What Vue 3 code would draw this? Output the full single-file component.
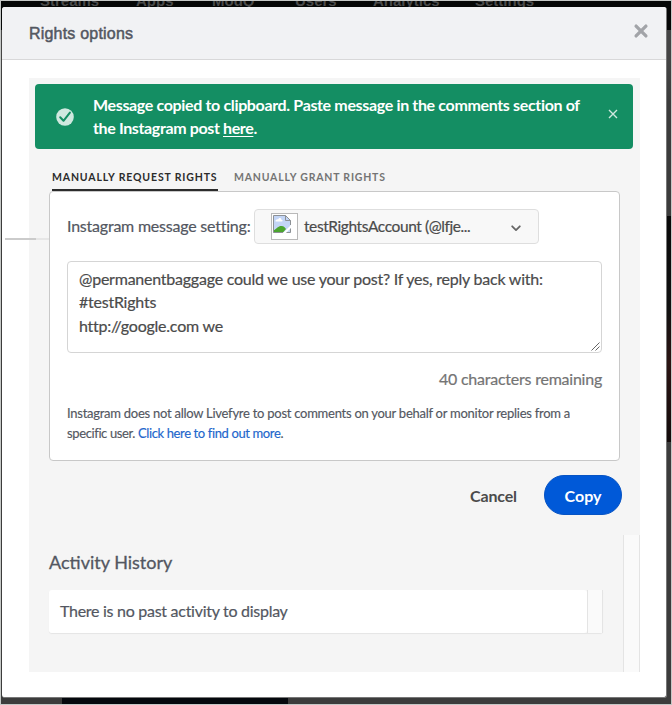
<script setup>
import { ref } from 'vue'

const navItems = ['Streams', 'Apps', 'ModQ', 'Users', 'Analytics', 'Settings']
const message = ref('@permanentbaggage could we use your post? If yes, reply back with:\n#testRights\nhttp://google.com we')
</script>

<template>
  <div class="page">
    <div class="backdrop">
      <nav class="nav">
        <span v-for="item in navItems" :key="item" :class="'nav-' + item.toLowerCase()">{{ item }}</span>
      </nav>
      <div class="side-image"></div>
      <div class="foot-image"></div>
    </div>

    <section class="modal">
      <header class="modal-header">
        <h1>Rights options</h1>
        <svg class="close" viewBox="0 0 14 14"><path d="M2.7 2.7 11.3 11.3M11.3 2.7 2.7 11.3" /></svg>
      </header>

      <div class="panel">
        <div class="edge-line"></div>
        <div class="alert">
          <svg class="check" viewBox="0 0 18 18">
            <circle cx="9" cy="9" r="8.8" />
            <path d="M4.2 9.3 7.5 12.8 13.9 4.6" />
          </svg>
          <p>
            <span class="l1">Message copied to clipboard. Paste message in the comments section of</span><br />
            <span class="l2">the Instagram post <a>here</a>.</span>
          </p>
          <svg class="dismiss" viewBox="0 0 10 10"><path d="M1 1 9 9M9 1 1 9" /></svg>
        </div>

        <div class="tabs">
          <span class="tab active">MANUALLY REQUEST RIGHTS</span>
          <span class="tab">MANUALLY GRANT RIGHTS</span>
        </div>

        <div class="card">
          <div class="setting">
            <span class="setting-label">Instagram message setting:</span>
            <div class="select">
              <svg class="avatar" viewBox="0 0 27 27">
                <rect x="0.5" y="0.5" width="26" height="26" fill="#fff" stroke="#b9b9b9" />
                <path d="M2.5 2.5H14.5L19.5 7.5V19.5H2.5Z" fill="#c3d5f6" />
                <path d="M4.3 8.2C4.3 6.5 6.8 6.3 7.2 6.3 8 4.3 10.5 5 10.4 6.7 12 6.8 12 8.5 10.8 8.5H5Z" fill="#fff" />
                <path d="M2.5 19.5V17.5C6 15.5 7 13 10.5 13.1 13 13.2 14 15 15 16L12 19.5Z" fill="#4ba52f" />
                <path d="M11.5 20.5 20.5 11.5V14.5L14.5 20.5Z" fill="#fff" />
                <path d="M2.5 19.5V2.5H14.5L19.5 7.5V12M14.5 2.5V7.5H19.5M2.5 19.5H12M15.5 19.5H19.5V15.5" fill="none" stroke="#8d9195" />
              </svg>
              <span class="account">testRightsAccount (@lfje...</span>
              <svg class="chevron" viewBox="0 0 10 7"><path d="M1.2 1.3 5 5.1 8.8 1.3" /></svg>
            </div>
          </div>
          <div class="message">{{ message }}<svg class="grip" viewBox="0 0 9 9"><path d="M0.5 8.5 8.5 0.5M4.5 8.5 8.5 4.5" /></svg></div>
          <div class="remaining"><span>40 characters remaining</span></div>
          <p class="note">
            <span class="n1">Instagram does not allow Livefyre to post comments on your behalf or monitor replies from a</span><br />
            <span class="n2">specific user. <a>Click here to find out more</a>.</span>
          </p>
        </div>

        <div class="actions">
          <span class="cancel">Cancel</span>
          <span class="copy"><span>Copy</span></span>
        </div>

        <div class="history">
          <div class="history-main">
            <h2><span>Activity History</span></h2>
            <div class="history-row">
              <div class="history-empty"><span>There is no past activity to display</span></div>
              <div class="track"></div>
            </div>
          </div>
          <div class="track outer"></div>
        </div>
      </div>
    </section>
  </div>
</template>

<style>
body { margin: 0; }
</style>

<style scoped>
* { box-sizing: border-box; }
.page {
  position: relative;
  width: 672px;
  height: 705px;
  padding: 7px 5px 6px 2px;
  overflow: hidden;
  background: #3c3c3c;
  font-family: Lato, "Noto Sans", sans-serif;
  color: #4b4b4b;
}
.page h1, .page h2, .page p { margin: 0; }
.page span { white-space: nowrap; }
.backdrop {
  position: absolute;
  inset: 0;
  border: 1px solid #c5c8c6;
  background: linear-gradient(#050706 0 29px, #444 29px 60px, #3c3c3c 100px);
}
.nav {
  position: absolute;
  inset: -9px 0 auto 0;
  height: 16px;
  clip-path: inset(9px 0 0 0);
  font: 700 15px/18px "Liberation Sans", sans-serif;
  color: #4a4a4a;
}
.nav span { position: absolute; top: 0; }
.nav .nav-streams { left: 39px; }
.nav .nav-apps { left: 135px; }
.nav .nav-modq { left: 211px; }
.nav .nav-users { left: 294px; }
.nav .nav-analytics { left: 372px; }
.nav .nav-settings { left: 474px; }
.side-image {
  position: absolute;
  top: 215px;
  right: 0;
  width: 6px;
  height: 226px;
  background: linear-gradient(#090909, #111 40%, #2b1413 65%, #130b0b);
}
.foot-image {
  position: absolute;
  left: 61px;
  bottom: 0;
  width: 226px;
  height: 7px;
  background: #05080d;
}
.modal {
  position: relative;
  width: 665px;
  height: 691px;
  border: solid #777;
  border-width: 0 1px 1px 0;
  border-radius: 3px;
  background: #fff;
  overflow: hidden;
}
.modal-header {
  display: flex;
  justify-content: space-between;
  height: 53px;
  padding: 16px 17px 0 27px;
  border-bottom: 1px solid #d8d8d9;
  background: #f1f2f4;
}
.modal-header h1 {
  padding-top: 1px;
  font: 400 16px/20px "Liberation Sans", sans-serif;
  letter-spacing: 0.2px;
  color: #535761;
  -webkit-text-stroke: 0.5px #535761;
}
.close { width: 16px; height: 16px; fill: none; stroke: #a2a4a8; stroke-width: 2.9; stroke-linecap: round; }
.panel {
  position: relative;
  width: 611px;
  height: 594px;
  margin: 18px 0 0 27px;
  padding-top: 6px;
  background: #f5f5f5;
}
.edge-line {
  position: absolute;
  left: -24px;
  top: 160px;
  width: 44px;
  height: 2px;
  background: linear-gradient(90deg, #cbcbcb 0 31px, #e6e6e6 31px);
}
.alert {
  display: flex;
  width: 598px;
  height: 65px;
  margin-left: 6px;
  padding: 9px 15px 0 21px;
  border-radius: 4px;
  background: #148e63;
  color: #fff;
}
.check { width: 18px; height: 18px; margin-top: 15px; fill: #cfe8df; }
.check path { fill: none; stroke: #148e63; stroke-width: 2; stroke-linecap: round; stroke-linejoin: round; }
.alert p { flex: 1; margin-left: 19px; font-size: 16px; font-weight: 700; line-height: 23px; letter-spacing: -0.35px; }
.l2 { letter-spacing: -0.37px; }
.alert a { text-decoration: underline; text-decoration-thickness: 1px; text-underline-offset: 2px; }
.dismiss { width: 10px; height: 10px; margin-top: 16px; fill: none; stroke: #cfe8df; stroke-width: 1.4; }
.tabs { display: flex; gap: 16px; height: 42px; padding: 21px 0 0 23px; }
.tab { height: 21px; font-size: 10.5px; font-weight: 700; line-height: 15px; letter-spacing: 0.8px; color: #747474; }
.tab.active { border-bottom: 2px solid #2c2c2c; color: #2c2c2c; width: 166px; letter-spacing: 0.85px; }
.card {
  width: 571px;
  height: 270px;
  margin-left: 20px;
  padding: 17px 17px 0;
  border: 1px solid #c8c8c8;
  border-radius: 4px;
  background: #fff;
}
.setting { display: flex; align-items: center; height: 35px; font-size: 16px; }
.setting-label { width: 187px; padding-bottom: 2px; color: #535761; letter-spacing: -0.22px; -webkit-text-stroke: 0.2px #535761; }
.select {
  display: flex;
  align-items: center;
  width: 285px;
  height: 35px;
  padding: 0 17px 0 16px;
  border: 1px solid #dedede;
  border-radius: 4px;
  background: #f8f8f8;
}
.avatar { width: 27px; height: 27px; }
.account { flex: 1; margin-left: 6px; padding-bottom: 2px; font-size: 15.5px; letter-spacing: -0.41px; -webkit-text-stroke: 0.2px #4b4b4b; }
.chevron { width: 10px; height: 7px; margin-top: 3px; fill: none; stroke: #666; stroke-width: 1.8; stroke-linecap: round; stroke-linejoin: round; }
.message {
  position: relative;
  height: 92px;
  margin-top: 17px;
  padding: 5px 11px;
  border: 1px solid #d5d5d5;
  border-radius: 4px;
  font-size: 16px;
  line-height: 23.3px;
  letter-spacing: -0.23px;
  white-space: pre;
  -webkit-text-stroke: 0.2px #4b4b4b;
}
.grip { position: absolute; right: 1px; bottom: 1px; width: 9px; height: 9px; fill: none; stroke: #666; stroke-width: 1; }
.remaining { margin-top: 16px; height: 20px; text-align: right; font-size: 16px; line-height: 20px; letter-spacing: -0.23px; color: #747474; -webkit-text-stroke: 0.2px #747474; }
.page .note { margin-top: 14px; font-size: 13px; line-height: 20px; letter-spacing: -0.26px; color: #535761; -webkit-text-stroke: 0.15px; }
.n2 { letter-spacing: -0.38px; }
.note a { color: #2266cc; }
.actions { display: flex; justify-content: flex-end; align-items: center; padding: 14px 18px 0 0; font-size: 16px; font-weight: 700; }
.cancel { width: 74px; letter-spacing: -0.15px; }
.copy {
  width: 78px;
  height: 40px;
  border: 1px solid #0754c4;
  border-radius: 20px;
  background: #0059d8;
  color: #fff;
  line-height: 39px;
  text-align: center;
}
.history { display: flex; height: 137px; margin-top: 20px; }
.history-main { width: 594px; padding: 16px 0 0 20px; }
.history h2 { height: 39px; font-size: 18px; font-weight: 400; line-height: 22px; color: #535761; -webkit-text-stroke: 0.3px #535761; }
.history-row { display: flex; width: 554px; height: 43px; border-radius: 3px; box-shadow: 0 1px 1px #e5e5e5; }
.history-empty { flex: 1; padding-left: 11px; border-radius: 3px; background: #fff; font-size: 16px; line-height: 41px; letter-spacing: -0.28px; color: #535761; -webkit-text-stroke: 0.2px #535761; }
.track { width: 16px; border: solid #e4e4e4; border-width: 0 1px; background: #fafafa; }
.outer { width: 17px; }
</style>
